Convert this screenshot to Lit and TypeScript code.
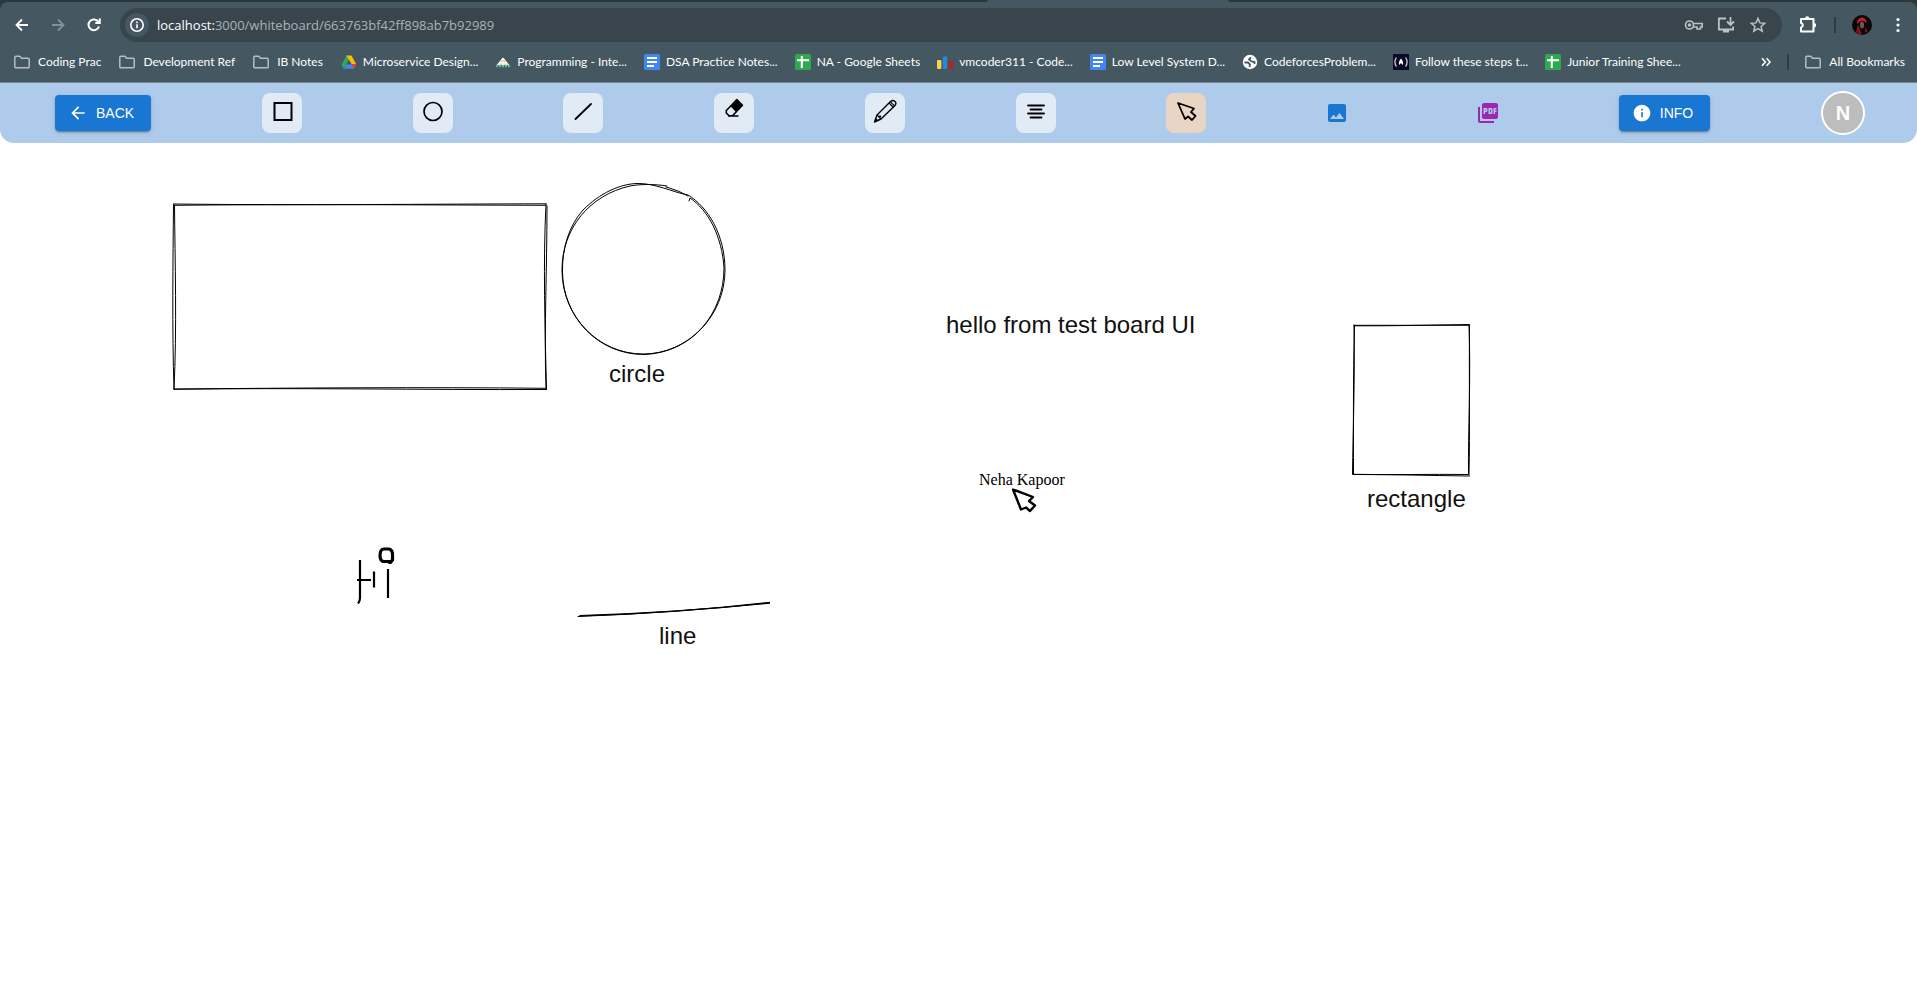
import { LitElement, html, svg, css } from "lit";
import { customElement, state } from "lit/decorators.js";
import { classMap } from "lit/directives/class-map.js";

type Bookmark = { icon: string; label: string };

const folder = svg`<path d="M.8 3.300Q.8 2.200 1.900 2.200H5.800L7.600 4.200H14.100Q15.200 4.200 15.200 5.300V12.700Q15.200 13.800 14.100 13.800H1.900Q.8 13.800 .8 12.700z" fill="none" stroke="#b9bdc0" stroke-width="1.500" stroke-linejoin="round"/>`;
const docs = svg`<rect width="16" height="16" rx="1.500" fill="#4285f4"/><path d="M3 4h10M3 8h10M3 12h7" stroke="#fff" stroke-width="1.800"/>`;
const sheets = svg`<rect width="16" height="16" rx="1.500" fill="#2fa94f"/><path d="M2 6.200h12M6.800 2v12" stroke="#fff" stroke-width="2"/>`;

const FAVICONS: Record<string, unknown> = {
  folder,
  docs,
  sheets,
  drive: svg`<path d="M5.500 1.500H8L8 6 5.500 10.300 2.800 14.700.8 11.500Q.6 10.800 1 10z" fill="#34a853"/><path d="M5.500 1.500h5L15.200 10.300H10.500L8 6z" fill="#fbbc04"/><path d="M2.800 14.700l2.700-4.400h5l2.700 4.400z" fill="#4285f4"/><path d="M10.500 10.300h4.700l-2 4.400z" fill="#ea4335"/><path d="M8 6l2.500 4.300h-5z" fill="#455760"/>`,
  bit: svg`<path d="M8 4l6 7.500H2z" fill="#f0a04a"/><path d="M8 4l6 7.500M8 4L2 11.500M5 8.500h6M8 5v6" stroke="#fff" stroke-width="1.200"/><path d="M4 11l2-2 2 2 2-2 2 2" fill="none" stroke="#f4efe6" stroke-width="1.400"/><path d="M1 12.300h14.500" stroke="#3fc1c0" stroke-width="2" stroke-dasharray="2 1"/>`,
  bars: svg`<rect x="0" y="6" width="4.400" height="9" rx="1" fill="#fbd04f"/><rect x="5.800" y="2.500" width="4.400" height="12.500" rx="1" fill="#1f8fd0"/><rect x="11.600" y="7" width="4.400" height="8" rx="1" fill="#b91f25"/>`,
  globe: svg`<circle cx="8" cy="8" r="7.200" fill="#fff"/><path d="M2.500 8.500H6L8 10.500 7.500 13M9 3.500L7 5.500l2.500 2 3 .5v2" fill="none" stroke="#455760" stroke-width="1.800"/>`,
  camp: svg`<rect width="16" height="16" fill="#0a0a23"/><path d="M3.400 3.500q-3 4.500 0 9M12.600 3.500q3 4.500 0 9" fill="none" stroke="#dcdce6" stroke-width="1.200"/><path d="M8 4.500q3 3.500 1.800 6.500L8 9l-1.800 2Q5 8 8 4.500z" fill="#fff"/>`,
};

const BOOKMARKS: Bookmark[] = [
  { icon: "folder", label: "Coding Prac" },
  { icon: "folder", label: "Development Ref" },
  { icon: "folder", label: "IB Notes" },
  { icon: "drive", label: "Microservice Design..." },
  { icon: "bit", label: "Programming - Inte..." },
  { icon: "docs", label: "DSA Practice Notes..." },
  { icon: "sheets", label: "NA - Google Sheets" },
  { icon: "bars", label: "vmcoder311 - Code..." },
  { icon: "docs", label: "Low Level System D..." },
  { icon: "globe", label: "CodeforcesProblem..." },
  { icon: "camp", label: "Follow these steps t..." },
  { icon: "sheets", label: "Junior Training Shee..." },
];

@customElement("browser-chrome")
export class BrowserChrome extends LitElement {
  static styles = css`
    :host {
      display: block;
      font-family: Lato, "Open Sans", sans-serif;
      font-size: 12px;
      color: #fff;
      background: #2b383e;
      border-bottom: 1px solid #7a878d;
    }
    .tabs { display: flex; height: 2px; padding-left: 51.5%; }
    .tab { width: 26%; background: #455760; border-radius: 2px 2px 0 0; }
    .nav, .marks { display: flex; align-items: center; background: #455760; }
    .nav { gap: 8px; padding: 6px 5px 6px 8px; border-radius: 8px 8px 0 0; }
    button {
      display: flex; align-items: center; justify-content: center; flex: none;
      width: 28px; height: 28px; padding: 0; border: 0; border-radius: 50%;
      background: none; color: inherit;
    }
    svg { display: block; flex: none; overflow: visible; }
    .omni {
      flex: 1; display: flex; align-items: center; gap: 8px; height: 34px; margin: 0 4px;
      padding: 0 10px 0 5px; border-radius: 17px; background: #39454c;
    }
    .site { width: 24px; height: 24px; background: #455760; }
    .url { flex: 1; font: 13px/20px "Open Sans", "Noto Sans", sans-serif; color: #abb1b5; white-space: nowrap; }
    .host { color: #fff; }
    .actions { display: flex; gap: 4px; }
    .divider { width: 2px; height: 16px; background: #2f3c43; }
    .nav .divider { margin: 0 4px; }
    .marks { height: 28px; padding: 0 12px 6px 14px; }
    .list { display: flex; gap: 17px; flex: 1; }
    a { display: flex; align-items: center; gap: 6px; color: inherit; text-decoration: none; white-space: nowrap; line-height: 16px; }
    .dir { gap: 8px; }
    .list .dir { padding-right: 1px; }
    .rest { display: flex; align-items: center; gap: 16px; }
    .more { width: 10px; }
  `;

  private favicon(name: string) {
    return html`<svg width="16" height="16" viewBox="0 0 16 16" aria-hidden="true">${FAVICONS[name]}</svg>`;
  }

  render() {
    return html`
      <div class="tabs"><div class="tab"></div></div>
      <div class="nav">
        <button aria-label="Back"><svg width="14" height="14" viewBox="0 0 14 14" fill="none" stroke="#fff" stroke-width="1.800"><path d="M13 7H2M7 1.500L1.500 7 7 12.500"/></svg></button>
        <button aria-label="Forward"><svg width="14" height="14" viewBox="0 0 14 14" fill="none" stroke="#84919a" stroke-width="1.800"><path d="M1 7h11M7 1.500L12.500 7 7 12.500"/></svg></button>
        <button aria-label="Reload"><svg width="14" height="14" viewBox="0 0 14 14" fill="none" stroke="#fff" stroke-width="2"><path d="M12 8.500A5.400 5.400 0 1 1 11.500 4M12.800 .5V5H8.300"/></svg></button>
        <div class="omni">
          <button class="site" aria-label="Site information"><svg width="16" height="16" viewBox="0 0 16 16" fill="none" stroke="#fff" stroke-width="1.600"><circle cx="8" cy="8" r="6.200"/><path d="M8 7.200V11.200M8 4.600V6.200"/></svg></button>
          <span class="url"><span class="host">localhost:</span>3000/whiteboard/663763bf42ff898ab7b92989</span>
          <div class="actions">
            <button aria-label="Passwords"><svg width="20" height="14" viewBox="0 0 20 14" fill="none" stroke="#bcc1c4" stroke-width="1.600"><circle cx="5.500" cy="7" r="4"/><path d="M9.200 5.500H18.200V9H16.500V11H13V9H9.200"/><circle cx="5.500" cy="7" r="1" fill="#bcc1c4"/></svg></button>
            <button aria-label="Install app"><svg width="18" height="16" viewBox="0 0 18 16" fill="none" stroke="#bcc1c4" stroke-width="1.800"><path d="M9 1.500H1.900V12.500H16.100V9.500M6 14.500h6M13.500 0V7.500M10 4.500l3.500 3.500L17 4.500"/></svg></button>
            <button aria-label="Bookmark this page"><svg width="16" height="16" viewBox="0 0 16 16" fill="none" stroke="#bcc1c4" stroke-width="1.500"><path d="M8 1.500l1.900 4.400 4.800.4-3.600 3.200 1.100 4.700L8 11.700l-4.200 2.500 1.100-4.700L1.300 6.300l4.800-.4z"/></svg></button>
          </div>
        </div>
        <button aria-label="Extensions"><svg width="18" height="18" viewBox="0 0 18 18"><path d="M2 3H14.500V15.500H2V11.500A2.300 2.300 0 0 0 2 7z" fill="none" stroke="#fff" stroke-width="2" stroke-linejoin="round"/><path d="M6 2.500a2.200 2.200 0 0 1 4.400 0zM15 7a2.200 2.200 0 0 1 0 4.400z" fill="#fff"/></svg></button>
        <div class="divider"></div>
        <button aria-label="Profile"><svg width="20" height="20" viewBox="0 0 20 20"><circle cx="10" cy="10" r="10" fill="#0b0607"/><path d="M5 9Q5 3 10 2.500 14.500 3 14.500 8L13 7Q10 4.500 7 7.500z" fill="#c01f30"/><path d="M4 17Q5 13 6 9L8 14 10 19.500Q6 19.500 4 17zM13 13l3 3-3 2z" fill="#7d1420"/><ellipse cx="10" cy="10" rx="2" ry="3.500" fill="#6b5a50"/></svg></button>
        <button aria-label="Menu"><svg width="4" height="16" viewBox="0 0 4 16" fill="#fff"><circle cx="2" cy="2.500" r="1.600"/><circle cx="2" cy="8" r="1.600"/><circle cx="2" cy="13.500" r="1.600"/></svg></button>
      </div>
      <div class="marks">
        <div class="list">
          ${BOOKMARKS.map((b) => html`<a href="#" class=${classMap({ dir: b.icon === "folder" })}>${this.favicon(b.icon)}<span>${b.label}</span></a>`)}
        </div>
        <div class="rest">
          <button class="more" aria-label="More bookmarks"><svg width="10" height="10" viewBox="0 0 10 10" fill="none" stroke="#fff" stroke-width="1.600"><path d="M1 1.200L4.400 5 1 8.800M5.600 1.200L9 5 5.600 8.800"/></svg></button>
          <div class="divider"></div>
          <a href="#" class="dir">${this.favicon("folder")}<span>All Bookmarks</span></a>
        </div>
      </div>
    `;
  }
}

const TOOLS: { id: string; label: string; icon: unknown }[] = [
  { id: "rect", label: "Rectangle", icon: svg`<rect x="2.500" y="2" width="17" height="17" fill="none" stroke="#000" stroke-width="2"/>` },
  { id: "circle", label: "Circle", icon: svg`<circle cx="10" cy="10.500" r="9" fill="none" stroke="#000" stroke-width="1.700"/>` },
  { id: "line", label: "Line", icon: svg`<path d="M2.500 18L18 3" stroke="#000" stroke-width="1.800" stroke-linecap="round"/>` },
  { id: "eraser", label: "Eraser", icon: svg`<path d="M12.800 -1.500L18.500 4.200 12.500 10.500 7 4.800z" stroke="#000" stroke-width="1.500" stroke-linejoin="round"/><path d="M7 4.800L2.300 9.500V12L5 14.800H8.500L12.500 10.500M4 15H14.500" fill="none" stroke="#000" stroke-width="1.600"/>` },
  { id: "pencil", label: "Pencil", icon: svg`<path d="M-.5 21L2 14 15.500 .5Q18-1.500 20 .5T19.500 5L6 18z" fill="none" stroke="#000" stroke-width="1.400" stroke-linejoin="round"/><path d="M2 14l4 4M14 2l4 4M15.500 .8l4 4M4.500 14.500L6 16" stroke="#000" stroke-width="1.100" fill="none"/><path d="M-.5 21l1.300-4 2.700 2.500z"/>` },
  { id: "text", label: "Text", icon: svg`<path d="M2 4.500h16M4.500 8.500h11M2 12.500h16M4.500 16.500h11" stroke="#000" stroke-width="1.800" stroke-linecap="round"/>` },
  { id: "select", label: "Select", icon: svg`<path d="M2 2L18 7.500 15 11 19.500 15 16 19 12 15.500 9 18z" fill="none" stroke="#000" stroke-width="1.800" stroke-linejoin="round"/>` },
];

@customElement("board-toolbar")
export class BoardToolbar extends LitElement {
  @state() private active = "select";

  static styles = css`
    :host {
      display: flex; align-items: center; justify-content: space-between;
      height: 60px; padding: 0 52px 0 55px; background: #aecbeb; border-radius: 0 0 14px 14px;
      font-family: "Liberation Sans", Arial, sans-serif;
    }
    button { display: flex; align-items: center; justify-content: center; padding: 0; border: 0; background: none; }
    svg { display: block; overflow: visible; }
    .tool { width: 40px; height: 40px; border-radius: 8px; background: #e1ebf6; padding-bottom: 4px; }
    .active { background: #e8d5c4; }
    .export { width: 40px; height: 40px; }
    .primary {
      height: 36px; padding: 0 17px 0 13px; gap: 8px; border-radius: 4px; background: #1976d2; color: #fff;
      font: 400 14px/24px "Liberation Sans", Arial, sans-serif;
      box-shadow: 0 3px 1px -2px rgba(0,0,0,.2), 0 2px 2px rgba(0,0,0,.14), 0 1px 5px rgba(0,0,0,.12);
    }
    .avatar {
      display: flex; align-items: center; justify-content: center; box-sizing: border-box;
      width: 44px; height: 44px; border: 2px solid #fff; border-radius: 50%;
      background: #bdbdbd; color: #fff; font-size: 20px; font-weight: 700;
    }
  `;

  render() {
    return html`
      <button class="primary"><svg width="20" height="20" viewBox="0 0 24 24" fill="#fff"><path d="M20 11H7.830l5.590-5.590L12 4l-8 8 8 8 1.410-1.410L7.830 13H20v-2z"/></svg>BACK</button>
      ${TOOLS.map((t) => html`
        <button class=${classMap({ tool: true, active: t.id === this.active })} aria-label=${t.label} aria-pressed=${t.id === this.active} @click=${() => (this.active = t.id)}>
          <svg width="20" height="20" viewBox="0 0 20 20">${t.icon}</svg>
        </button>`)}
      <button class="export" aria-label="Save as image"><svg width="24" height="24" viewBox="0 0 24 24" fill="#1976d2"><path d="M21 19V5c0-1.100-.9-2-2-2H5c-1.100 0-2 .9-2 2v14c0 1.100.9 2 2 2h14c1.100 0 2-.9 2-2zM8.500 13.500l2.500 3.010L14.500 12l4.500 6H5l3.500-4.500z"/></svg></button>
      <button class="export" aria-label="Save as PDF"><svg width="24" height="24" viewBox="0 0 24 24" fill="#9c27b0"><path d="M20 2H8c-1.100 0-2 .9-2 2v12c0 1.100.9 2 2 2h12c1.100 0 2-.9 2-2V4c0-1.100-.9-2-2-2zm-8.500 7.500c0 .83-.67 1.500-1.500 1.500H9v2H7.500V7H10c.83 0 1.500.67 1.500 1.500v1zm5 2c0 .83-.67 1.500-1.500 1.500h-2.500V7H15c.83 0 1.500.67 1.500 1.500v3zm4-3H19v1h1.500V11H19v2h-1.500V7h3v1.500zM9 9.500h1v-1H9v1zM4 6H2v14c0 1.100.9 2 2 2h14v-2H4V6zm10 5.500h1v-3h-1v3z"/></svg></button>
      <button class="primary"><svg width="20" height="20" viewBox="0 0 24 24" fill="#fff"><path d="M12 2C6.480 2 2 6.480 2 12s4.480 10 10 10 10-4.480 10-10S17.520 2 12 2zm1 15h-2v-6h2v6zm0-8h-2V7h2v2z"/></svg>INFO</button>
      <div class="avatar">N</div>
    `;
  }
}

const LABELS = [
  { text: "hello from test board UI", x: 946, y: 333 },
  { text: "circle", x: 609, y: 382 },
  { text: "rectangle", x: 1367, y: 507 },
  { text: "line", x: 659, y: 644 },
];

@customElement("board-canvas")
export class BoardCanvas extends LitElement {
  static styles = css`
    :host { display: flex; flex: 1; background: #fff; }
    svg { display: block; flex: 1; min-height: 520px; }
    .stroke { fill: none; stroke: #000; stroke-width: 1; stroke-linecap: round; }
    .pen { fill: none; stroke: #000; stroke-width: 2.200; }
    .thick { stroke-width: 3.200; stroke-linejoin: round; }
    .label { font: 24px "Liberation Sans", Arial, sans-serif; fill: #111; }
    .user { font: 16px "Liberation Serif", "Times New Roman", serif; }
  `;

  render() {
    return html`
      <svg role="img" aria-label="Whiteboard">
        <g transform="translate(0 -143)">
          <path class="stroke" d="M173.500 204C300 205.500 430 204 546 203.800M174 205.300C300 204 430 205 546 205.300M546 204C543 260 545 330 546.500 389M547 206C547 270 544 330 546 389M546.500 388.300C420 387 300 388 174 389M546.500 389.500C420 390 300 387.500 174 389.300M174 389C172 330 173 260 173.500 204.500M174 389C177 330 175 260 174.500 205"/>
          <path class="stroke" d="M667 186C655 184 640 184 630 186C590 195 562 228 562 270C562 316 598 354 643 354C688 354 725 316 725 270C725 235 708 207 688 195C672 192 655 183 637 183.500C620 184 600 193 583 210C569 226 562 248 562.500 272C563 318 599 355 645 354.500C694 352 724 312 724 268C722 236 708 210 690 198L689 201M666 187l2 .5Q680 191 688 196"/>
          <path class="stroke" d="M1354 325.300H1469.500M1354 325.800C1400 326 1430 325 1469 324.500M1354 325C1355 380 1353 430 1352.500 474M1354.500 326C1353 380 1353.500 430 1353.500 474M1469 325C1471 380 1468 430 1468.500 474M1469.500 325C1469 380 1470 430 1469 475M1353 474.500C1390 475 1430 474 1468 474.500M1353 474.300C1390 474.500 1430 475.500 1469.500 476"/>
          <path class="stroke" d="M578 616.500Q675 613 769.500 602.300M580 615.500Q675 612.500 769.500 603.300M580 616Q675 613.300 769.500 602.800"/>
          <path class="pen" d="M360 560V598Q360 601 358 603.500M357 580H371M374 571.500V587.500M388 569V598"/>
          <path class="pen thick" d="M390 564V561.500H383Q380 560 380 556Q380 549 384 549H389Q393 550 392.500 556V560L390 563"/>
          <path d="M1013 489.500L1033 497 1029 501 1035 505.500 1030 511 1026 507.500 1021 509.500z" fill="#fff" stroke="#000" stroke-width="2.400" stroke-linejoin="round"/>
          ${LABELS.map((l) => svg`<text class="label" x=${l.x} y=${l.y}>${l.text}</text>`)}
          <text class="user" x="979" y="485">Neha Kapoor</text>
        </g>
      </svg>
    `;
  }
}

@customElement("app-root")
export class AppRoot extends LitElement {
  static styles = css`
    :host { display: flex; flex-direction: column; min-height: 100vh; background: #fff; }
  `;
  render() {
    return html`<browser-chrome></browser-chrome><board-toolbar></board-toolbar><board-canvas></board-canvas>`;
  }
}
